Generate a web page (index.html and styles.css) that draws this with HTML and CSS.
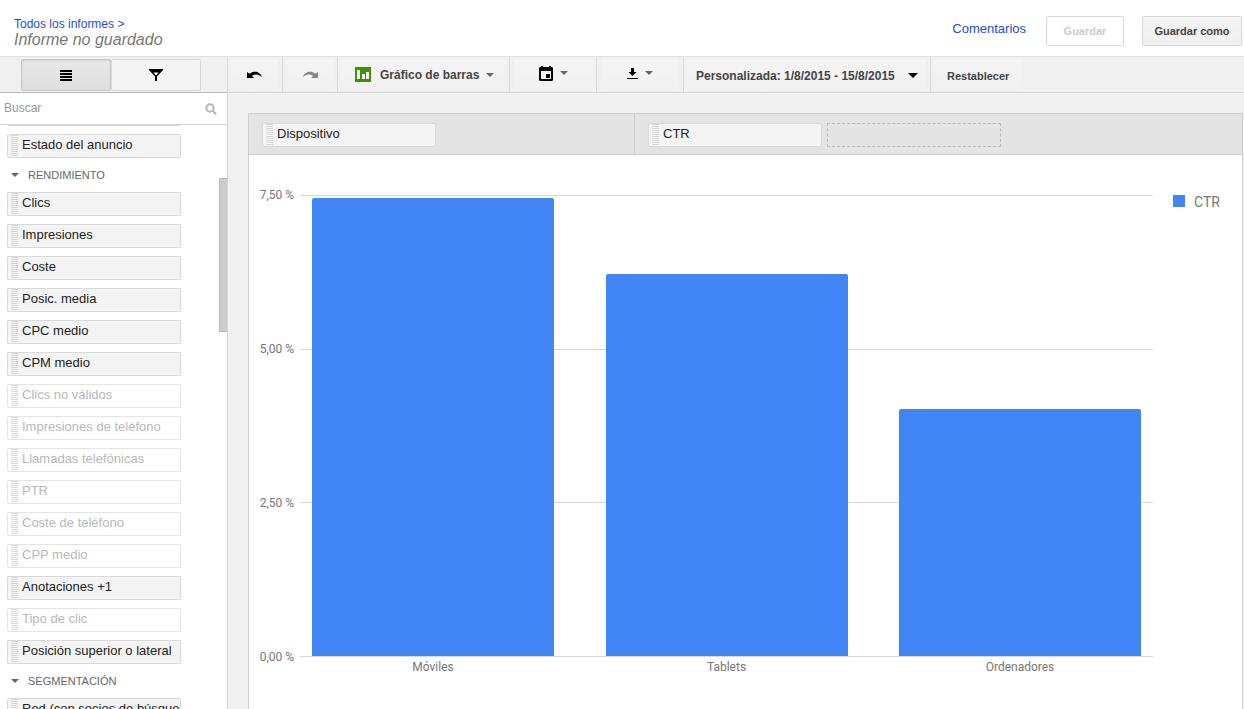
FILE: index.html
```html
<!DOCTYPE html>
<html lang="es">
<head>
<meta charset="utf-8">
<meta name="viewport" content="width=device-width, initial-scale=1">
<title>Informe no guardado</title>
<link rel="stylesheet" href="styles.css">
</head>
<body>
<header class="header">
  <div class="header-title">
    <a class="link crumb" href="#">Todos los informes &gt;</a>
    <h1 class="report-name">Informe no guardado</h1>
  </div>
  <div class="header-actions">
    <a class="link comments" href="#">Comentarios</a>
    <button class="btn btn-save" type="button" disabled>Guardar</button>
    <button class="btn btn-save-as" type="button">Guardar como</button>
  </div>
</header>

<div class="workspace">
  <aside class="sidebar">
    <div class="tabs">
      <button class="tab tab-active" type="button" aria-label="Campos">
        <svg width="12" height="11" viewBox="0 0 12 11" shape-rendering="crispEdges"><path d="M0 0h12v2H0zM0 3h12v2H0zM0 6h12v2H0zM0 9h12v2H0z"/></svg>
      </button>
      <button class="tab" type="button" aria-label="Filtros">
        <svg width="14" height="12" viewBox="0 0 14 12"><path fill-rule="evenodd" d="M0 0h14v1L8 7.500V12H6V7.500L0 1zM4.500 3.500l2 2.500h1l2-2.500z"/></svg>
      </button>
    </div>
    <label class="search">
      <input class="search-input" type="search" placeholder="Buscar" aria-label="Buscar">
      <svg width="12" height="12" viewBox="0 0 12 12" fill="none" stroke="#b5b5b5" stroke-width="2"><circle cx="5" cy="5" r="3.700"/><path d="M7.700 7.700l3.500 3.500"/></svg>
    </label>
    <div class="fields">
      <div class="field-list">
        <div class="chip-end"></div>
        <button class="chip" type="button">Estado del anuncio</button>
        <button class="group" type="button"><span class="caret"></span>RENDIMIENTO</button>
        <button class="chip" type="button">Clics</button>
        <button class="chip" type="button">Impresiones</button>
        <button class="chip" type="button">Coste</button>
        <button class="chip" type="button">Posic. media</button>
        <button class="chip" type="button">CPC medio</button>
        <button class="chip" type="button">CPM medio</button>
        <button class="chip" type="button" disabled>Clics no válidos</button>
        <button class="chip" type="button" disabled>Impresiones de teléfono</button>
        <button class="chip" type="button" disabled>Llamadas telefónicas</button>
        <button class="chip" type="button" disabled>PTR</button>
        <button class="chip" type="button" disabled>Coste de teléfono</button>
        <button class="chip" type="button" disabled>CPP medio</button>
        <button class="chip" type="button">Anotaciones +1</button>
        <button class="chip" type="button" disabled>Tipo de clic</button>
        <button class="chip" type="button">Posición superior o lateral</button>
        <button class="group" type="button"><span class="caret"></span>SEGMENTACIÓN</button>
        <button class="chip" type="button">Red (con socios de búsqueda)</button>
      </div>
      <div class="scroll-track"><div class="scroll-thumb"></div></div>
    </div>
  </aside>

  <main class="main">
    <div class="toolbar">
      <div class="tool"><button class="tool-btn tool-icon" type="button" aria-label="Deshacer">
        <svg width="16" height="8" viewBox="0 0 16 8"><path d="M0 1v6h7L5 5C7.500 2.700 12 3 15 6 13.500 1 7 -1.200 2.500 2.800z"/></svg>
      </button></div>
      <div class="tool"><button class="tool-btn tool-icon" type="button" aria-label="Rehacer" disabled>
        <svg width="16" height="8" viewBox="0 0 16 8" fill="#888"><path d="M16 1v6H9l2-2C8.500 2.700 4 3 1 6 2.500 1 9 -1.200 13.500 2.800z"/></svg>
      </button></div>
      <div class="tool"><button class="tool-btn tool-chart" type="button">
        <svg width="16" height="15" viewBox="0 0 16 15" shape-rendering="crispEdges"><rect width="16" height="15" rx="1" fill="#3c9400"/><path fill="#fff" d="M2 3h3v9H2zM7 7h3v5H7zM11 5h3v7h-3z"/></svg>
        <span>Gráfico de barras</span><span class="caret"></span>
      </button></div>
      <div class="tool"><button class="tool-btn tool-menu" type="button" aria-label="Calendario">
        <svg width="14" height="15" viewBox="0 0 14 15"><path fill-rule="evenodd" d="M2 0h2v1h6V0h2v1h1l1 1v12l-1 1H1l-1-1V2l1-1h1zM2 5v8h10V5z"/><path d="M7 8h4v4H7z"/></svg>
        <span class="caret"></span>
      </button></div>
      <div class="tool"><button class="tool-btn tool-menu" type="button" aria-label="Descargar">
        <svg width="11" height="11" viewBox="0 0 11 11"><path d="M4 0h3v4h2.500l-4 4-4-4H4zM0 10h11v1H0z"/></svg>
        <span class="caret"></span>
      </button></div>
      <div class="tool"><button class="tool-btn tool-date" type="button">Personalizada: 1/8/2015 - 15/8/2015<span class="caret caret-dark"></span></button></div>
      <div class="tool tool-last"><button class="tool-btn tool-reset" type="button">Restablecer</button></div>
    </div>

    <section class="panel">
      <div class="shelves">
        <div class="shelf shelf-row"><button class="chip" type="button">Dispositivo</button></div>
        <div class="shelf"><button class="chip" type="button">CTR</button><div class="drop-slot"></div></div>
      </div>
      <div class="chart">
        <div class="y-axis"><span>7,50 %</span><span>5,00 %</span><span>2,50 %</span><span>0,00 %</span></div>
        <div class="plot">
          <div class="grid-lines"><i></i><i></i><i></i><i></i></div>
          <div class="bars">
            <div class="bar" style="height:99.400%"></div>
            <div class="bar" style="height:82.900%"></div>
            <div class="bar" style="height:53.600%"></div>
          </div>
        </div>
        <div class="legend"><span class="swatch"></span>CTR</div>
        <div class="x-axis"><span>Móviles</span><span>Tablets</span><span>Ordenadores</span></div>
      </div>
    </section>
  </main>
</div>
</body>
</html>
```

FILE: styles.css
```css
* { box-sizing: border-box; }

body {
  margin: 0;
  height: 100vh;
  display: flex;
  flex-direction: column;
  overflow: hidden;
  background: #fff;
  color: #222;
  font: 13px/20px "Liberation Sans", Arial, sans-serif;
}

button {
  margin: 0;
  padding: 0;
  border: 0;
  background: none;
  color: inherit;
  font: inherit;
}

svg { display: block; flex: none; }

.link { color: #2050cc; text-decoration: none; }

/* Header */
.header {
  display: flex;
  justify-content: space-between;
  align-items: flex-start;
  padding: 16px 2px 8px 14px;
  border-bottom: 1px solid #e2e2e2;
}
.header-title { display: flex; flex-direction: column; }
.crumb { font-size: 12px; line-height: 16px; }
.report-name {
  margin: 0;
  color: #777;
  font-size: 16px;
  font-style: italic;
  font-weight: normal;
  line-height: 16px;
}
.header-actions { display: flex; align-items: flex-start; }
.comments { margin-right: 20px; line-height: 26px; }
.btn {
  height: 30px;
  border: 1px solid #d8d8d8;
  border-radius: 2px;
  background: linear-gradient(#f5f5f5, #f0f0f0);
  color: #444;
  font-size: 11px;
  font-weight: bold;
}
.btn-save-as { width: 100px; }
.btn-save {
  width: 78px;
  margin-right: 18px;
  background: #fff;
  color: #ccc;
}

/* Sidebar */
.workspace { display: flex; flex: 1; min-height: 0; }
.sidebar {
  display: flex;
  flex: none;
  flex-direction: column;
  width: 228px;
  border-right: 1px solid #d8d8d8;
}
.tabs {
  display: flex;
  padding: 2px 26px 1px 21px;
  border-bottom: 1px solid #bbb;
  background: #f0f0f0;
}
.tab {
  display: flex;
  flex: 1;
  align-items: center;
  justify-content: center;
  height: 32px;
  border: 1px solid #d8d8d8;
  border-radius: 2px;
  background: #f4f4f4;
}
.tab-active {
  border-color: #c8c8c8;
  background: linear-gradient(#e9e9e9, #dedede);
  box-shadow: inset 0 1px 2px rgba(0, 0, 0, .1);
}
.search {
  display: flex;
  align-items: center;
  height: 32px;
  padding: 0 10px 0 4px;
  border-bottom: 1px solid #d4d4d4;
}
.search-input {
  flex: 1;
  min-width: 0;
  padding: 0 0 2px;
  border: 0;
  outline: 0;
  background: none;
  font: 12px/16px "Liberation Sans", Arial, sans-serif;
}
.search-input::placeholder { color: #999; }
.fields { display: flex; flex: 1; min-height: 0; }
.field-list {
  display: flex;
  flex: 1;
  flex-direction: column;
  gap: 8px;
  padding: 0 38px 0 7px;
  overflow: hidden;
}
.chip-end { flex: none; height: 1px; margin: 0 1px; background: #d4d4d4; }
.chip {
  flex: none;
  width: 174px;
  height: 24px;
  padding: 0 0 2px 14px;
  border: 1px solid #d9d9d9;
  border-radius: 2px;
  background:
    repeating-linear-gradient(#d8d8d8 0 1px, transparent 1px 2px) 3px 0 / 7px 100% no-repeat,
    #f4f4f4;
  color: #222;
  line-height: 18px;
  overflow: hidden;
  text-align: left;
  white-space: nowrap;
}
.chip:disabled { border-color: #e4e4e4; background-color: #fff; color: #b8b8b8; }
.group {
  display: flex;
  flex: none;
  align-items: center;
  gap: 9px;
  height: 18px;
  padding-left: 4px;
  color: #666;
  font-size: 11px;
}
.caret {
  flex: none;
  border: solid transparent;
  border-width: 4px 4px 0;
  border-top-color: #666;
}
.scroll-track { flex: none; width: 8px; padding-top: 53px; }
.scroll-thumb { height: 154px; border: 1px solid #b8b8b8; border-right: 0; background: #ccc; }

/* Toolbar */
.main {
  display: flex;
  flex: 1;
  flex-direction: column;
  min-width: 0;
  background: #f0f0f0;
}
.toolbar { display: flex; height: 36px; border-bottom: 1px solid #d8d8d8; }
.tool { display: flex; padding: 3px 4px; border-right: 1px solid #d8d8d8; }
.tool-last { border-right: 0; }
.tool-btn {
  display: flex;
  align-items: center;
  background: linear-gradient(#f5f5f5, #f1f1f1);
  color: #444;
  font-weight: bold;
  white-space: nowrap;
}
.tool-icon { justify-content: center; width: 46px; }
.tool-chart { gap: 7px; width: 163px; padding-left: 13px; font-size: 12px; }
.tool-chart svg { margin-right: 2px; }
.tool-menu { justify-content: center; gap: 7px; width: 78px; padding-bottom: 3px; }
.tool-date { justify-content: space-between; width: 238px; padding: 2px 8px 0; font-size: 12px; }
.caret-dark { border-width: 5px 5px 0; border-top-color: #000; }
.tool-reset { padding: 2px 12px 0; font-size: 11px; }

/* Report */
.panel {
  display: flex;
  flex: 1;
  flex-direction: column;
  margin: 20px 1px 0 20px;
  border: 1px solid #d0d0d0;
  border-bottom: 0;
  background: #fff;
}
.shelves {
  display: flex;
  border-bottom: 1px solid #d0d0d0;
  background: #e4e4e4;
}
.shelf { display: flex; flex: 1; gap: 5px; padding: 9px 13px 7px; }
.shelf-row { flex: 0 0 386px; border-right: 1px solid #d0d0d0; }
.drop-slot { width: 174px; height: 24px; border: 1px dashed #bbb; }
.chart {
  display: grid;
  flex: 1;
  grid-template: 1fr 20px / 51px 1fr 89px;
  padding: 40px 0 32px;
  color: #777;
  font: 12px/20px Roboto, sans-serif;
}
.y-axis {
  display: flex;
  flex-direction: column;
  justify-content: space-between;
  margin: -10px 0;
  padding-right: 6px;
  text-align: right;
}
.plot { display: grid; }
.grid-lines, .bars { grid-area: 1 / 1; display: flex; justify-content: space-between; }
.grid-lines { flex-direction: column; }
.grid-lines i { height: 1px; background: #d8d8d8; }
.bars { align-items: flex-end; padding: 0 12px 1px; }
.bar { width: 242px; flex: 0 1 242px; border-radius: 2px 2px 0 0; background: #4285f4; }
.x-axis {
  display: flex;
  grid-column: 2;
  justify-content: space-between;
  padding: 0 12px;
  text-align: center;
}
.x-axis span { flex: 0 1 242px; }
.legend {
  display: flex;
  align-items: flex-start;
  gap: 9px;
  padding-left: 20px;
  font-size: 14px;
  line-height: 14px;
}
.swatch { width: 12px; height: 12px; background: #4285f4; }
```
